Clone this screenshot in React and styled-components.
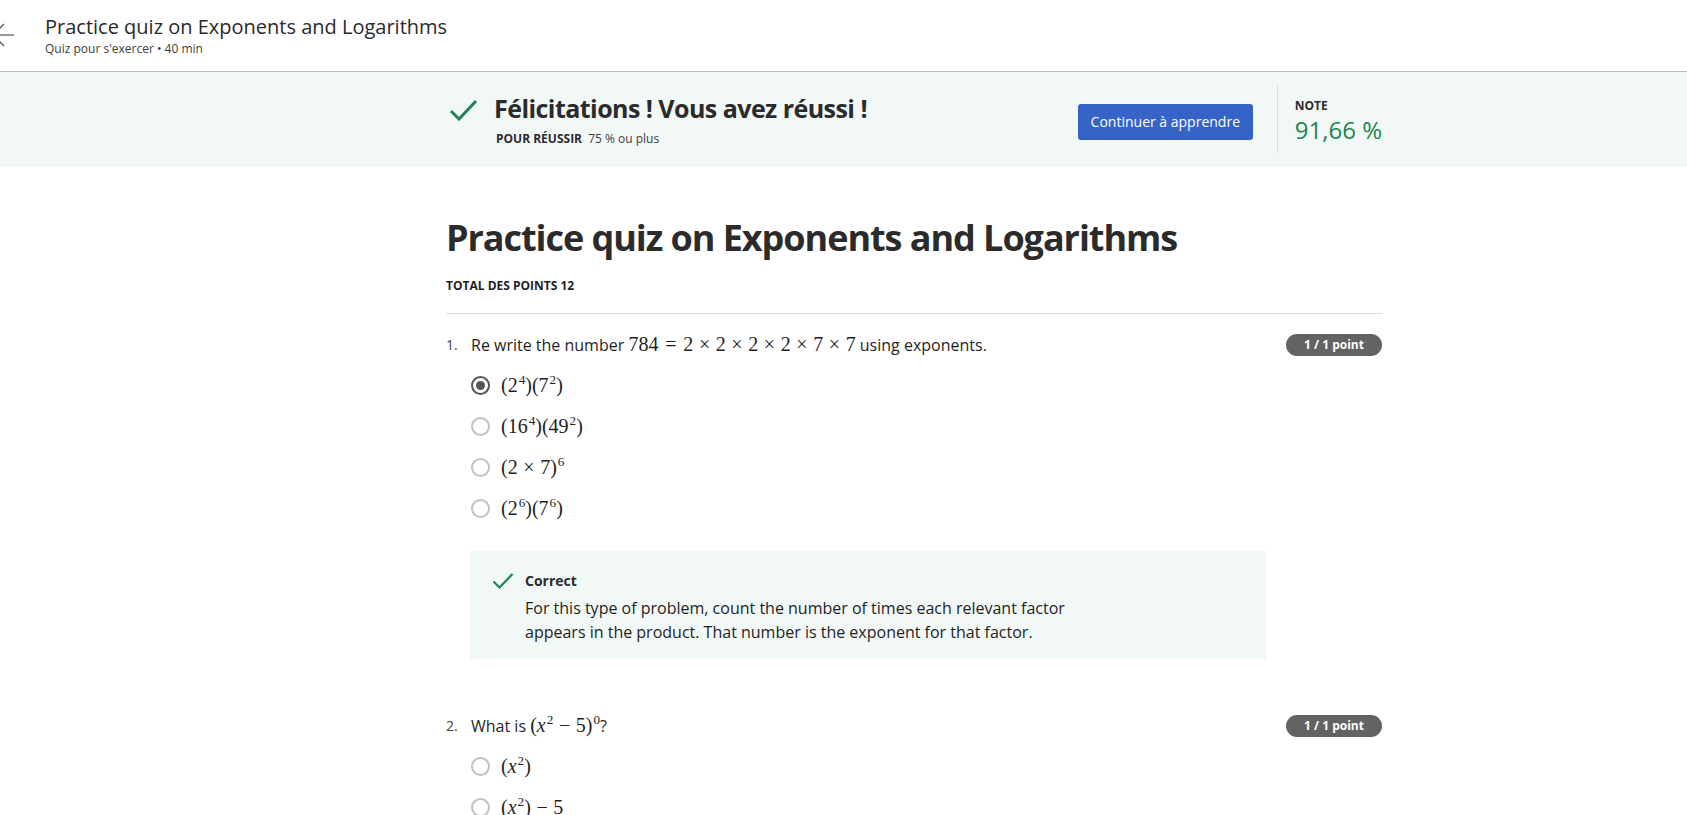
import styled, { createGlobalStyle } from "styled-components";

const GlobalStyle = createGlobalStyle`
  body {
    margin: 0;
    font-family: "Open Sans", "Liberation Sans", sans-serif;
    color: #1f1f1f;
    background: #fff;
  }
  * { box-sizing: border-box; }
`;

export default function App() {
  return (
    <Page>
      <GlobalStyle />
      <TopBar>
        <BackArrow width="45" height="71" viewBox="0 0 45 71">
          <path d="M-7 35 H14" stroke="#9a9a9a" strokeWidth="2" fill="none" />
          <path d="M4 24 L-7 35 L4 46" stroke="#555" strokeWidth="1.3" fill="none" />
        </BackArrow>
        <TopTitles>
          <TopTitle>Practice quiz on Exponents and Logarithms</TopTitle>
          <TopSub>Quiz pour s'exercer • 40 min</TopSub>
        </TopTitles>
      </TopBar>

      <Banner>
        <Container>
          <BannerRow>
            <Success>
              <BigCheck width="30" height="24" viewBox="0 0 30 24">
                <polyline points="2,13 10,21 27,3" fill="none" stroke="#1f8354" strokeWidth="3" />
              </BigCheck>
              <div>
                <Congrats>Félicitations ! Vous avez réussi !</Congrats>
                <PassLine>
                  <b>POUR RÉUSSIR</b> 75 % ou plus
                </PassLine>
              </div>
            </Success>
            <PrimaryButton>Continuer à apprendre</PrimaryButton>
            <VDivider />
            <Grade>
              <GradeLabel>NOTE</GradeLabel>
              <GradeValue>91,66 %</GradeValue>
            </Grade>
          </BannerRow>
        </Container>
      </Banner>

      <Container>
        <QuizTitle>Practice quiz on Exponents and Logarithms</QuizTitle>
        <Total>TOTAL DES POINTS 12</Total>
        <Rule />

        <Question>
          <QRow>
            <QNum>1.</QNum>
            <QText>
              Re write the number{" "}
              <M>
                784<Eq>=</Eq>2<Op>×</Op>2<Op>×</Op>2<Op>×</Op>2<Op>×</Op>7<Op>×</Op>7
              </M>{" "}
              using exponents.
            </QText>
            <Badge>1 / 1 point</Badge>
          </QRow>
          <Options>
            <Option>
              <Radio $checked />
              <M>
                (2<Sup>4</Sup>)(7<Sup>2</Sup>)
              </M>
            </Option>
            <Option>
              <Radio />
              <M>
                (16<Sup>4</Sup>)(49<Sup>2</Sup>)
              </M>
            </Option>
            <Option>
              <Radio />
              <M>
                (2<Op>×</Op>7)<Sup>6</Sup>
              </M>
            </Option>
            <Option>
              <Radio />
              <M>
                (2<Sup>6</Sup>)(7<Sup>6</Sup>)
              </M>
            </Option>
          </Options>
          <Feedback>
            <SmallCheck width="22" height="18" viewBox="0 0 22 18">
              <polyline points="1.5,9.5 7.5,15.5 20.5,2" fill="none" stroke="#1f8354" strokeWidth="2.2" />
            </SmallCheck>
            <div>
              <FeedbackTitle>Correct</FeedbackTitle>
              <FeedbackText>
                For this type of problem, count the number of times each relevant factor appears in
                the product. That number is the exponent for that factor.
              </FeedbackText>
            </div>
          </Feedback>
        </Question>

        <Question $gap>
          <QRow>
            <QNum>2.</QNum>
            <QText>
              What is{" "}
              <M>
                (<V>x</V>
                <Sup>2</Sup>
                <Op>−</Op>5)<Sup>0</Sup>
              </M>
              ?
            </QText>
            <Badge>1 / 1 point</Badge>
          </QRow>
          <Options>
            <Option>
              <Radio />
              <M>
                (<V>x</V>
                <Sup>2</Sup>)
              </M>
            </Option>
            <Option>
              <Radio />
              <M>
                (<V>x</V>
                <Sup>2</Sup>)<Op>−</Op>5
              </M>
            </Option>
          </Options>
        </Question>
      </Container>
    </Page>
  );
}

const Page = styled.div`
  width: 100%;
  height: 815px;
  overflow: hidden;
`;

const TopBar = styled.header`
  height: 72px;
  display: flex;
  align-items: center;
  border-bottom: 1px solid #bdbdbd;
`;

const BackArrow = styled.svg`
  flex: none;
  align-self: flex-start;
  overflow: hidden;
`;

const TopTitles = styled.div`
  display: flex;
  flex-direction: column;
`;

const TopTitle = styled.div`
  font-size: 20px;
  line-height: 26px;
  color: #2a2a2a;
`;

const TopSub = styled.div`
  font-size: 12px;
  line-height: 18px;
  color: #3d3d3d;
`;

const Banner = styled.section`
  background: #f2f8f6;
  height: 95px;
`;

const Container = styled.div`
  width: 936px;
  margin-left: 446px;
`;

const BannerRow = styled.div`
  height: 95px;
  display: flex;
  align-items: center;
`;

const Success = styled.div`
  flex: 1;
  display: flex;
  align-items: flex-start;
  gap: 15px;
  padding-left: 3px;
`;

const BigCheck = styled.svg`
  flex: none;
  margin-top: 6px;
`;

const Congrats = styled.h2`
  margin: 0;
  font-size: 25px;
  line-height: 32px;
  font-weight: 700;
  letter-spacing: -0.55px;
  color: #2b2b2b;
`;

const PassLine = styled.div`
  margin-top: 6px;
  padding-left: 2px;
  font-size: 12px;
  line-height: 18px;
  color: #3d3d3d;
  b {
    font-weight: 700;
    color: #2b2b2b;
    margin-right: 3px;
  }
`;

const PrimaryButton = styled.button`
  width: 175px;
  height: 36px;
  margin-top: 4px;
  border: none;
  border-radius: 3px;
  background: #3563c7;
  color: #fff;
  font-family: "Open Sans", sans-serif;
  font-size: 14px;
  font-weight: 500;
  cursor: pointer;
`;

const VDivider = styled.div`
  width: 1px;
  height: 67px;
  background: #dadada;
  margin: 0 17px 0 24px;
`;

const Grade = styled.div`
  display: flex;
  flex-direction: column;
  margin-top: 2px;
`;

const GradeLabel = styled.div`
  font-size: 12px;
  line-height: 18px;
  font-weight: 700;
  color: #2b2b2b;
`;

const GradeValue = styled.div`
  font-size: 24px;
  line-height: 30px;
  color: #1f8354;
`;

const QuizTitle = styled.h1`
  margin: 48px 0 0;
  font-size: 36px;
  line-height: 46px;
  font-weight: 700;
  letter-spacing: -1.05px;
  color: #2b2b2b;
`;

const Total = styled.div`
  margin-top: 16px;
  font-size: 12px;
  line-height: 18px;
  font-weight: 700;
  color: #1f1f1f;
`;

const Rule = styled.hr`
  margin: 18px 0 0;
  border: none;
  border-top: 1px solid #dadada;
`;

const Question = styled.div`
  margin-top: ${(p) => (p.$gap ? "54px" : "18px")};
`;

const QRow = styled.div`
  display: flex;
  align-items: center;
  min-height: 24px;
`;

const QNum = styled.span`
  width: 25px;
  flex: none;
  font-size: 14px;
  color: #444;
`;

const QText = styled.div`
  flex: 1;
  font-size: 16px;
  line-height: 24px;
  color: #1f1f1f;
`;

const Badge = styled.span`
  flex: none;
  width: 96px;
  height: 22px;
  border-radius: 11px;
  background: #636363;
  color: #fff;
  font-size: 12px;
  font-weight: 700;
  display: flex;
  align-items: center;
  justify-content: center;
`;

const Options = styled.div`
  margin-top: 8px;
  padding-left: 25px;
  display: flex;
  flex-direction: column;
`;

const Option = styled.label`
  height: 41px;
  display: flex;
  align-items: center;
  gap: 11px;
`;

const Radio = styled.span`
  width: 19px;
  height: 19px;
  flex: none;
  border-radius: 50%;
  border: 2px solid ${(p) => (p.$checked ? "#555" : "#c2c2c2")};
  display: flex;
  align-items: center;
  justify-content: center;
  &::after {
    content: "";
    width: 9px;
    height: 9px;
    border-radius: 50%;
    background: ${(p) => (p.$checked ? "#555" : "transparent")};
  }
`;

const M = styled.span`
  font-family: "Liberation Serif", "DejaVu Serif", serif;
  font-size: 20px;
  color: #1f1f1f;
  white-space: nowrap;
`;

const V = styled.i`
  font-style: italic;
`;

const Op = styled.span`
  margin: 0 0.28em;
`;

const Eq = styled.span`
  margin: 0 0.34em;
`;

const Sup = styled.sup`
  font-size: 0.66em;
  vertical-align: 0.6em;
  line-height: 0;
  margin-left: 1px;
`;

const Feedback = styled.div`
  margin: 22px 0 0 24px;
  width: 796px;
  background: #f2f8f6;
  padding: 20px 16px 15px 22px;
  display: flex;
  align-items: flex-start;
  gap: 11px;
`;

const SmallCheck = styled.svg`
  flex: none;
  margin-top: 1px;
`;

const FeedbackTitle = styled.div`
  font-size: 14px;
  line-height: 20px;
  font-weight: 700;
  color: #2b2b2b;
`;

const FeedbackText = styled.p`
  margin: 5px 0 0;
  max-width: 560px;
  font-size: 16px;
  line-height: 24px;
  color: #1f1f1f;
`;
